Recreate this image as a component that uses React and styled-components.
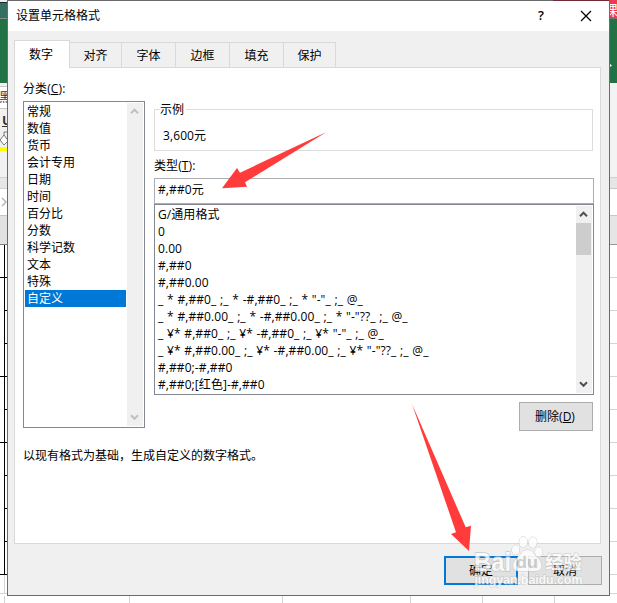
import React, { useState } from 'react'
import styled, { createGlobalStyle, css } from 'styled-components'

const GlobalStyle = createGlobalStyle`
  * { box-sizing: border-box; }
  body {
    margin: 0;
    overflow: hidden;
    background: #fff;
    color: #000;
    font: 12px/17px "Open Sans", "Noto Sans CJK SC", sans-serif;
  }
  button, input { font: inherit; color: inherit; }
`

const Screen = styled.div`
  position: relative;
  display: grid;
  grid-template: 596px 7px / 7px 603px 7px;
  width: 617px;
  height: 603px;
  overflow: hidden;
`

// slices of the workbook that stick out around the dialog
const Edge = styled.div`
  display: flex;
  flex-direction: column;
  overflow: hidden;
`
const Band = styled.div`
  flex: none;
  height: ${p => p.$h}px;
  background: ${p => p.$bg || 'transparent'};
  color: ${p => p.$color || '#333'};
  border-bottom: ${p => (p.$line ? `1px solid ${p.$line}` : 'none')};
  font-size: ${p => p.$size || 12}px;
  line-height: ${p => p.$h}px;
  text-indent: ${p => p.$indent || 0}px;
  white-space: nowrap;
  overflow: hidden;
`
const Cell = styled.div`
  flex: none;
  height: ${p => p.$h || 33}px;
  margin-left: ${p => p.$inset || 0}px;
  border-bottom: 1px solid ${p => p.$line};
  &::after {
    content: "";
    display: block;
    height: calc(100% + 1px);
    margin-left: ${p => 4 - (p.$inset || 0)}px;
    border-left: ${p => (p.$side ? `1px solid ${p.$side}` : 'none')};
  }
`
const BottomCells = styled.div`
  grid-column: 1 / -1;
  display: grid;
  grid-template-columns: 5px 125px 153px 128px 72px 72px 1fr;
  & > span { border-right: 1px solid #d4d4d4; }
  & > span:last-child { border: 0; }
`

const Dialog = styled.section`
  display: flex;
  flex-direction: column;
  background: #f0f0f0;
  border: 1px solid #6b6b6b;
`
const TitleBar = styled.header`
  display: flex;
  align-items: center;
  height: 30px;
  padding: 0 17px 1px 8px;
  background: #fff;
`
const Title = styled.h1`
  flex: 1;
  margin: 0;
  font-size: 12px;
  font-weight: 400;
`
const TitleButton = styled.button`
  display: flex;
  align-items: center;
  justify-content: center;
  width: 12px;
  height: 20px;
  margin-left: ${p => p.$gap || 0}px;
  padding: 0;
  border: 0;
  background: none;
  font-size: 13px;
  font-weight: 600;
`

const Tabs = styled.nav`
  display: flex;
  align-items: flex-end;
  height: 36px;
  margin-left: 6px;
`
const Tab = styled.button`
  width: ${p => p.$w}px;
  height: 25px;
  padding: 0;
  border: 1px solid #d9d9d9;
  border-width: 1px 1px 0 0;
  background: #f0f0f0;
  line-height: 25px;
  ${p => p.$active && css`
    position: relative;
    height: 28px;
    margin-bottom: -1px;
    padding-right: 2px;
    border-left-width: 1px;
    background: #fff;
    line-height: 27px;
  `}
`
const Panel = styled.main`
  height: 477px;
  width: 587px;
  margin-left: 6px;
  padding-left: 8px;
  border: 1px solid #d9d9d9;
  background: #fff;
`
const Columns = styled.div`
  display: grid;
  grid-template-columns: 122px 440px;
  gap: 9px;
  height: 363px;
`
const Label = styled.div`
  height: ${p => p.$h}px;
  padding-top: ${p => p.$top}px;
  letter-spacing: 0.1px;
`
const ListBox = styled.div`
  display: flex;
  height: ${p => p.$h}px;
  padding: 1px;
  border: 1px solid #828790;
  background: #fff;
`
const Items = styled.ul`
  flex: 1;
  min-width: 0;
  margin: 0 ${p => p.$gap || 0}px 0 0;
  padding: 0;
  list-style: none;
  letter-spacing: ${p => p.$spacing || 0}px;
  word-spacing: ${p => p.$wordSpacing || 0}px;
  overflow: hidden;
`
const Item = styled.li`
  height: 17px;
  padding-left: 2px;
  line-height: 17px;
  white-space: pre;
  ${p => p.$selected && css`
    background: #0078d7;
    color: #fff;
  `}
`
const ScrollTrack = styled.div`
  display: flex;
  flex-direction: column;
  width: 16px;
  height: 100%;
  background: #f0f0f0;
  color: ${p => (p.$disabled ? '#bfbfbf' : '#505050')};
`
const ScrollArrow = styled.div`
  display: flex;
  align-items: center;
  justify-content: center;
  width: 15px;
  height: 17px;
`
const Thumb = styled.div`
  width: 15px;
  height: 32px;
  margin-bottom: auto;
  background: #cdcdcd;
`
const Filler = styled.div`
  flex: 1;
`
const Sample = styled.div`
  height: 42px;
  width: 439px;
  margin-top: 41px;
  padding-left: 5px;
  border: 1px solid #dcdcdc;
`
const SampleTitle = styled.div`
  width: 26px;
  margin-top: -9px;
  background: #fff;
`
const SampleValue = styled.div`
  margin: 9px 0 0 3px;
  letter-spacing: 0.1px;
`
const TypeInput = styled.input`
  display: block;
  width: 440px;
  height: 26px;
  padding: 0 0 4px 3px;
  border: 1px solid #abadb3;
  outline: 0;
  letter-spacing: 0.1px;
`
const Button = styled.button`
  width: 74px;
  height: 29px;
  padding: 0 ${p => p.$shift || 0}px 0 0;
  border: ${p => (p.$primary ? '2px solid #0078d7' : '1px solid #adadad')};
  background: #e1e1e1;
`
const DeleteRow = styled.div`
  display: flex;
  justify-content: flex-end;
  padding: 7px 1px 0 0;
`
const Hint = styled.p`
  margin: 16px 0 0;
`
const Footer = styled.footer`
  display: flex;
  justify-content: flex-end;
  gap: 10px;
  padding: 12px 7px 0 0;
`
const Overlay = styled.svg`
  position: absolute;
  inset: 0;
  pointer-events: none;
`

const tabs = [['数字', 56], ['对齐', 52], ['字体', 54], ['边框', 54], ['填充', 54], ['保护', 52]]
const categories = ['常规', '数值', '货币', '会计专用', '日期', '时间', '百分比', '分数', '科学记数', '文本', '特殊', '自定义']
const formats = [
  'G/通用格式',
  '0',
  '0.00',
  '#,##0',
  '#,##0.00',
  '_ * #,##0_ ;_ * -#,##0_ ;_ * "-"_ ;_ @_ ',
  '_ * #,##0.00_ ;_ * -#,##0.00_ ;_ * "-"??_ ;_ @_ ',
  '_ ¥* #,##0_ ;_ ¥* -#,##0_ ;_ ¥* "-"_ ;_ @_ ',
  '_ ¥* #,##0.00_ ;_ ¥* -#,##0.00_ ;_ ¥* "-"??_ ;_ @_ ',
  '#,##0;-#,##0',
  '#,##0;[红色]-#,##0',
]
const gridRows = [277, 310, 343, 376, 409, 442, 475, 508, 541, 574]
// rows whose border runs on into the column to the left
const wideRows = [277, 376, 442, 574]

const Chevron = ({ down }) => (
  <svg width="9" height="7" viewBox="0 0 9 7">
    <path d={down ? 'M1 1.3 4.5 4.8 8 1.3' : 'M1 5.2 4.5 1.7 8 5.2'} fill="none" stroke="currentColor" strokeWidth="2" />
  </svg>
)

const ScrollBar = ({ disabled }) => (
  <ScrollTrack $disabled={disabled}>
    <ScrollArrow><Chevron /></ScrollArrow>
    {disabled ? <Filler /> : <Thumb />}
    <ScrollArrow><Chevron down /></ScrollArrow>
  </ScrollTrack>
)

const LeftEdge = () => (
  <Edge>
    <Band $h={3} $bg="#e9edf2" $line="#1c2b33" />
    <Band $h={16} $bg="#34705f" $line="#8a8a8a" />
    <Band $h={64} $bg="#217346" />
    <Band $h={4} $bg="#f1f1f1" $line="#c6c6c6" />
    <Band $h={22} $bg="#fff" $line="#c6c6c6" $indent={-1}>黑</Band>
    <Band $h={22} $bg="#f1f1f1" $size={13} $indent={2}><b><u>U</u></b></Band>
    <Band $h={16} $bg="#f1f1f1">
      <svg width="7" height="16" viewBox="0 0 7 16">
        <path d="M4 4 0 9l4 5 3-3M4 4V1h3M4 4l3 4" fill="#fff" stroke="#777" />
      </svg>
    </Band>
    <Band $h={4} $bg="#ffff00" />
    <Band $h={27} $bg="#f1f1f1" $line="#d0d0d0" />
    <Band $h={11} $bg="#e6e6e6" $line="#d0d0d0" />
    <Band $h={27} $bg="#fff" $line="#c6c6c6">
      <svg width="7" height="26" viewBox="0 0 7 26">
        <path d="M2 9l4 4-4 4" fill="none" stroke="#b5b5b5" strokeWidth="1.5" />
      </svg>
    </Band>
    <Band $h={29} $bg="#e1e1e1" $line="#808080" />
    {gridRows.map(y => <Cell key={y} $line="#000" $side="#000" $inset={wideRows.includes(y) ? 0 : 4} />)}
    <Cell $h={19} $line="#d4d4d4" $side="#d4d4d4" />
  </Edge>
)

const RightEdge = () => (
  <Edge>
    <Band $h={19} $bg="#f0394f" $color="#fff" $line="#777" $size={14} $indent={-6}>课</Band>
    <Band $h={64} $bg="#217346" $color="#fff" $size={9}>
      <svg width="7" height="64" viewBox="0 0 7 64">
        <path d="M0 45l2 1.500-2 1.500z" fill="#fff" />
      </svg>
    </Band>
    <Band $h={95} $bg="#f3f3f3" $line="#d0d0d0" />
    <Band $h={11} $bg="#e6e6e6" $line="#c6c6c6" />
    <Band $h={27} $bg="#fff" $line="#c6c6c6" />
    <Band $h={29} $bg="#e6e6e6" $line="#999" />
    {gridRows.map(y => <Cell key={y} $line="#d4d4d4" />)}
    <Cell $h={19} $line="#d4d4d4" />
  </Edge>
)

const Watermark = () => (
  <g fill="#fff" stroke="#bdbdbd" strokeWidth="1" paintOrder="stroke" opacity="0.78">
    <text x="474" y="571" fontFamily="Liberation Sans, sans-serif" fontSize="25" fontWeight="700" textLength="37" lengthAdjust="spacingAndGlyphs" strokeWidth="1.4">Bai</text>
    <ellipse cx="515.7" cy="550" rx="3.8" ry="4.8" />
    <ellipse cx="523.3" cy="542" rx="4.1" ry="5.4" />
    <ellipse cx="532.8" cy="542.5" rx="4.1" ry="5.4" transform="rotate(8 532.8 542.5)" />
    <ellipse cx="538.8" cy="552" rx="3.9" ry="4.8" />
    <path d="M527 550c-5 0-6 5-10 8-6 5-5 13 2 13h17c7 0 7-8 2-13-4-3-5-8-11-8Z" />
    <text x="516" y="568" fontFamily="Liberation Sans, sans-serif" fontSize="17" fontWeight="700" fill="#c4c4c4" stroke="none" textLength="22" lengthAdjust="spacingAndGlyphs">du</text>
    <text x="545" y="569" fontFamily="Noto Sans CJK SC, sans-serif" fontSize="18.5" fontWeight="700">经验</text>
    <text x="474.500" y="583.500" fontFamily="Liberation Sans, sans-serif" fontSize="12.500" textLength="108" fontWeight="700">jingyan.baidu.com</text>
  </g>
)

export default function App() {
  const [tab, setTab] = useState('数字')
  const [category, setCategory] = useState('自定义')
  const [type, setType] = useState('#,##0元')

  return (
    <Screen>
      <GlobalStyle />
      <LeftEdge />
      <Dialog>
        <TitleBar>
          <Title>设置单元格格式</Title>
          <TitleButton>?</TitleButton>
          <TitleButton $gap={33}>
            <svg width="12" height="12" viewBox="0 0 12 12">
              <path d="M1 1l10 10M11 1 1 11" stroke="#000" strokeWidth="1.2" />
            </svg>
          </TitleButton>
        </TitleBar>
        <Tabs>
          {tabs.map(([name, width]) => (
            <Tab key={name} $w={width} $active={name === tab} onClick={() => setTab(name)}>{name}</Tab>
          ))}
        </Tabs>
        <Panel>
          <Columns>
            <div>
              <Label $h={33} $top={12}>分类(<u>C</u>):</Label>
              <ListBox $h={327}>
                <Items $gap={1}>
                  {categories.map(name => (
                    <Item key={name} $selected={name === category} onClick={() => setCategory(name)}>{name}</Item>
                  ))}
                </Items>
                <ScrollBar disabled />
              </ListBox>
            </div>
            <div>
              <Sample>
                <SampleTitle>示例</SampleTitle>
                <SampleValue>3,600元</SampleValue>
              </Sample>
              <Label $h={27} $top={6}>类型(<u>T</u>):</Label>
              <TypeInput value={type} onChange={evt => setType(evt.target.value)} />
              <ListBox $h={191}>
                <Items $spacing={0.08} $wordSpacing={0.48}>
                  {formats.map(format => (
                    <Item key={format} onClick={() => setType(format)}>{format}</Item>
                  ))}
                </Items>
                <ScrollBar />
              </ListBox>
              <DeleteRow>
                <Button $shift={2}>删除(<u>D</u>)</Button>
              </DeleteRow>
            </div>
          </Columns>
          <Hint>以现有格式为基础，生成自定义的数字格式。</Hint>
        </Panel>
        <Footer>
          <Button $primary>确定</Button>
          <Button>取消</Button>
        </Footer>
      </Dialog>
      <RightEdge />
      <BottomCells>
        <span /><span /><span /><span /><span /><span /><span />
      </BottomCells>
      <Overlay width="617" height="603" viewBox="0 0 617 603">
        <path d="M553 .5h56" stroke="#6e2b35" />
        <g fill="#ff3b3b">
          <path d="M326.5 132 240 172.7 237 168l-15 20.2 25-1.4-2-4.5Z" />
          <path d="M412 404 456 532.3l-5 1.8 18 17 2-25.4-5.3 1.6Z" />
        </g>
        <Watermark />
      </Overlay>
    </Screen>
  )
}
